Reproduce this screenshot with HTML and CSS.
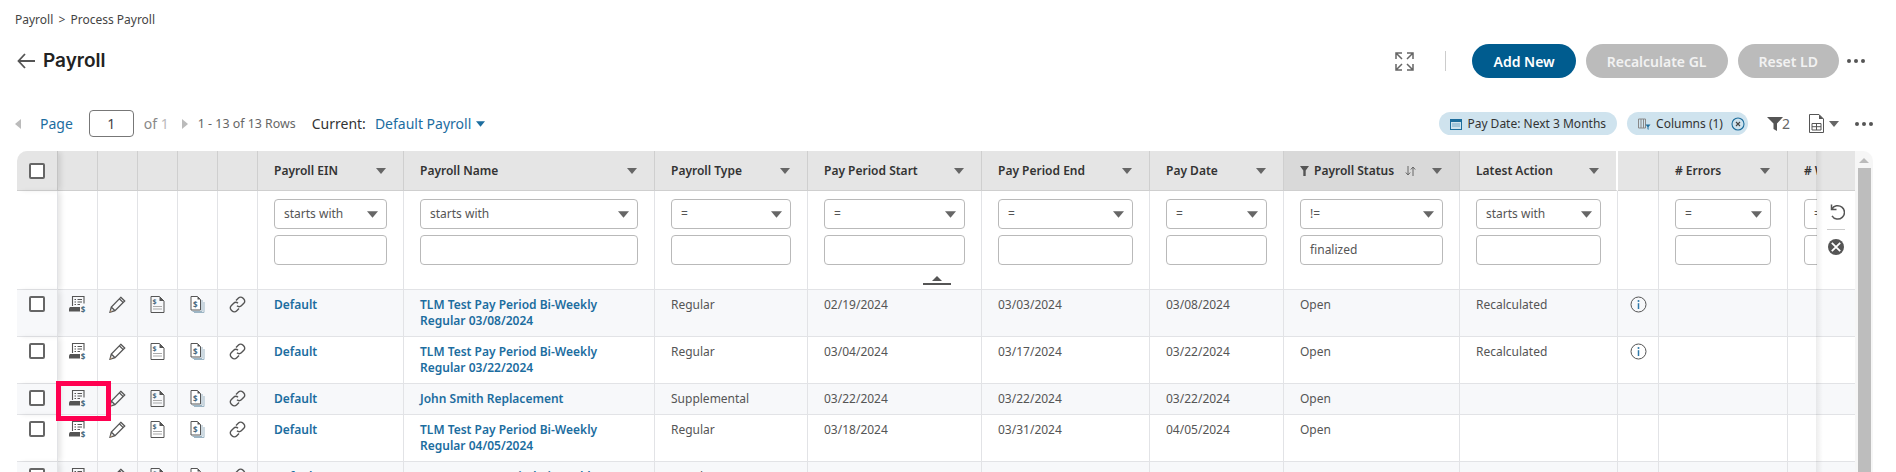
FILE: index.html
```html
<!DOCTYPE html>
<html lang="en">
<head>
<meta charset="utf-8">
<title>Payroll</title>
<link rel="stylesheet" href="styles.css">
</head>
<body>
<svg class="defs" aria-hidden="true">
  <symbol id="i-run" viewBox="0 0 17 17">
    <path d="M3.500 10V.5h11.500v7" fill="none" stroke="#555" stroke-width="1.100"/>
    <path d="M5.500 3.500h1.500M8.500 3.500h4.500M5.500 6h1.500M8.500 6h4.500M5.500 8.500h1.500M8.500 8.500h2.500" stroke="#555" stroke-width="1.100"/>
    <path d="M0 12.500l1-1.500h10v4.500H0z" fill="#555"/>
    <text x="11.800" y="16.500" class="dollar-md">$</text>
  </symbol>
  <symbol id="i-pencil" viewBox="0 0 17 17">
    <path d="M11.800 1.300l3.900 3.700L6 14.700l-5 1.500 1.300-5.200zM10.300 2.800l4 3.800M2.300 11l3.700 3.700" fill="none" stroke="#555" stroke-width="1.300"/>
    <path d="M1 16.200l.5-2.300 1.800 1.700z" fill="#aa8a6a"/>
  </symbol>
  <symbol id="i-doc" viewBox="0 0 14 17">
    <path d="M.5.500h8.500l4.500 4.500v11.500H.5z" fill="none" stroke="#555" stroke-width="1"/>
    <path d="M9 .5l4.500 4.500H9z" fill="#555"/>
    <path d="M2.500 10.500h9M2.500 13h9" stroke="#aaa" stroke-width="1.200"/>
    <text x="2" y="8" class="dollar-sm">$</text>
  </symbol>
  <symbol id="i-docs" viewBox="0 0 14 17">
    <path d="M2 15.500h9.500V4M3.500 16.500h10V6" fill="none" stroke="#9db5c4" stroke-width="1"/>
    <path d="M.5.500h6.500l3 3v10.500H.5z" fill="#fff" stroke="#555" stroke-width="1"/>
    <path d="M7 .5l3 3H7z" fill="#555"/>
    <text x="2.400" y="11.500" class="dollar-md">$</text>
  </symbol>
  <symbol id="i-link" viewBox="0 0 17 17">
    <path d="M7 4.500l2.500-2.500a3 3 0 0 1 4.300 0l1 1a3 3 0 0 1 0 4.300L12.300 9.800a3 3 0 0 1-4.300 0" fill="none" stroke="#555" stroke-width="1.400"/>
    <path d="M10 12.500L7.500 15a3 3 0 0 1-4.300 0l-1-1a3 3 0 0 1 0-4.300L4.700 7.200a3 3 0 0 1 4.300 0" fill="none" stroke="#555" stroke-width="1.400"/>
  </symbol>
  <symbol id="i-info" viewBox="0 0 17 17">
    <circle cx="8.500" cy="8.500" r="7.500" fill="none" stroke="#555" stroke-width="1"/>
    <circle cx="8.500" cy="5" r="1" fill="#2f78a8"/>
    <path d="M8.500 7.200v5.800" stroke="#2f78a8" stroke-width="1.500"/>
  </symbol>
  <symbol id="i-caret" viewBox="0 0 10 6">
    <path d="M0 0h10L5 6z" fill="currentColor"/>
  </symbol>
  <symbol id="i-dots" viewBox="0 0 18 4">
    <circle cx="2" cy="2" r="2" fill="#555"/><circle cx="9" cy="2" r="2" fill="#555"/><circle cx="16" cy="2" r="2" fill="#555"/>
  </symbol>
</svg>

<nav class="breadcrumb">Payroll <span class="crumb-sep">&gt;</span> Process Payroll</nav>

<header class="title-row">
  <svg class="back" viewBox="0 0 18 16"><path d="M8 1L1.500 8 8 15M1.500 8H18" fill="none" stroke="#555" stroke-width="1.800"/></svg>
  <h1 class="title">Payroll</h1>
  <svg class="expand" viewBox="0 0 19 19">
    <path d="M1 7V1h6M1 1l6 6M12 1h6v6M18 1l-6 6M1 12v6h6M1 18l6-6M18 12v6h-6M18 18l-6-6" fill="none" stroke="#666" stroke-width="1.500"/>
  </svg>
  <span class="title-divider"></span>
  <button class="btn btn-primary">Add New</button>
  <button class="btn btn-disabled">Recalculate GL</button>
  <button class="btn btn-disabled">Reset LD</button>
  <svg class="dots title-dots"><use href="#i-dots"/></svg>
</header>

<section class="toolbar">
  <span class="arrow-left"></span>
  <a class="page-link">Page</a>
  <input class="page-input" value="1">
  <span class="of">of <span class="of-num">1</span></span>
  <span class="arrow-right"></span>
  <span class="rows">1 - 13 of 13 Rows</span>
  <span class="current">Current:</span>
  <a class="view">Default Payroll</a>
  <svg class="view-caret"><use href="#i-caret"/></svg>
  <span class="spacer"></span>
  <span class="chip chip-date">
    <svg class="chip-icon" viewBox="0 0 12 12">
      <rect x=".5" y="1.500" width="11" height="10" fill="none" stroke="#1d6d9c"/>
      <path d="M.5 1.500h11v2.500H.5z" fill="#1d6d9c"/>
      <path d="M2.500 6h7M2.500 8h7" stroke="#1d6d9c" stroke-dasharray="1 1"/>
    </svg>
    Pay Date: Next 3 Months
  </span>
  <span class="chip chip-cols">
    <svg class="chip-icon-cols" viewBox="0 0 13 12">
      <path d="M.5 1v9h7V1zM3 1v9M5.500 1v9" fill="none" stroke="#888"/>
      <path d="M7.500 6.500h5l-2 2.500v3l-1-1V9z" fill="#1d6d9c"/>
    </svg>
    Columns (1)
    <svg class="chip-close" viewBox="0 0 14 14">
      <circle cx="7" cy="7" r="6" fill="none" stroke="#1d6d9c" stroke-width="1.100"/>
      <path d="M5 5l4 4M9 5l-4 4" stroke="#444" stroke-width="1.100"/>
    </svg>
  </span>
  <svg class="funnel" viewBox="0 0 16 14"><path d="M0 0h16L10 6.500V14L6.500 12V6.500z" fill="#555"/></svg>
  <span class="funnel-count">2</span>
  <svg class="export" viewBox="0 0 15 19">
    <path d="M.5.500h9.500l4.500 4.500v13.500H.5z" fill="#fff" stroke="#555"/>
    <path d="M10 .5l4.500 4.500H10z" fill="#555"/>
    <path d="M3 9.500h9v6.500H3zM3 12.700h9M7.500 9.500V16" fill="none" stroke="#555"/>
  </svg>
  <svg class="export-caret"><use href="#i-caret"/></svg>
  <svg class="dots toolbar-dots"><use href="#i-dots"/></svg>
</section>

<section class="grid">
  <div class="grid-main">
    <table class="data">
      <colgroup>
        <col class="c-check"><col class="w40"><col class="w40"><col class="w40"><col class="w40"><col class="w40">
        <col class="c-ein"><col class="c-name"><col class="c-type"><col class="c-start"><col class="c-end"><col class="c-pay"><col class="c-status"><col class="c-action"><col class="c-info"><col class="c-err"><col class="c-warn"><col class="c-tools">
      </colgroup>
      <thead>
        <tr class="head">
          <th class="cb-cell frozen"><span class="cb"></span></th>
          <th></th><th></th><th></th><th></th><th></th>
          <th><div class="th"><span>Payroll EIN</span><svg class="th-caret"><use href="#i-caret"/></svg></div></th>
          <th><div class="th"><span>Payroll Name</span><svg class="th-caret"><use href="#i-caret"/></svg></div></th>
          <th><div class="th"><span>Payroll Type</span><svg class="th-caret"><use href="#i-caret"/></svg></div></th>
          <th><div class="th"><span>Pay Period Start</span><svg class="th-caret"><use href="#i-caret"/></svg></div></th>
          <th><div class="th"><span>Pay Period End</span><svg class="th-caret"><use href="#i-caret"/></svg></div></th>
          <th><div class="th"><span>Pay Date</span><svg class="th-caret"><use href="#i-caret"/></svg></div></th>
          <th class="sorted"><div class="th th-status">
            <svg class="th-funnel" viewBox="0 0 9 10"><path d="M0 0h9L5.700 4.500V10H3.300V4.500z" fill="#555"/></svg>
            <span>Payroll Status</span>
            <svg class="th-sort" viewBox="0 0 11 10"><path d="M3 0v8.500M.8 6.500L3 9l2.200-2.500M8 10V1.500M5.800 3.500L8 1l2.200 2.500" fill="none" stroke="#666" stroke-width="1"/></svg>
            <svg class="th-caret th-caret-end"><use href="#i-caret"/></svg>
          </div></th>
          <th class="gap-right"><div class="th"><span>Latest Action</span><svg class="th-caret"><use href="#i-caret"/></svg></div></th>
          <th></th>
          <th><div class="th"><span># Errors</span><svg class="th-caret"><use href="#i-caret"/></svg></div></th>
          <th class="clip"><div class="th th-wide"><span># Warnings</span></div></th>
          <th class="tools-head"></th>
        </tr>
        <tr class="filters">
          <td class="frozen"></td><td></td><td></td><td></td><td></td><td></td>
          <td><div class="sel">starts with<svg class="sel-caret"><use href="#i-caret"/></svg></div><div class="inp"></div></td>
          <td><div class="sel">starts with<svg class="sel-caret"><use href="#i-caret"/></svg></div><div class="inp"></div></td>
          <td><div class="sel">=<svg class="sel-caret"><use href="#i-caret"/></svg></div><div class="inp"></div></td>
          <td><div class="sel">=<svg class="sel-caret"><use href="#i-caret"/></svg></div><div class="inp"></div></td>
          <td><div class="sel">=<svg class="sel-caret"><use href="#i-caret"/></svg></div><div class="inp"></div></td>
          <td><div class="sel">=<svg class="sel-caret"><use href="#i-caret"/></svg></div><div class="inp"></div></td>
          <td><div class="sel">!=<svg class="sel-caret"><use href="#i-caret"/></svg></div><div class="inp">finalized</div></td>
          <td><div class="sel">starts with<svg class="sel-caret"><use href="#i-caret"/></svg></div><div class="inp"></div></td>
          <td></td>
          <td><div class="sel">=<svg class="sel-caret"><use href="#i-caret"/></svg></div><div class="inp"></div></td>
          <td class="clip"><div class="sel sel-wide">=</div><div class="inp inp-wide"></div></td>
          <td class="tools">
            <svg class="tool-undo" viewBox="0 0 17 17"><path d="M3.500 1.500v5h5M3.800 6.300A6.700 6.700 0 1 1 4 12.800" fill="none" stroke="#555" stroke-width="1.500"/></svg>
            <span class="tool-line"></span>
            <svg class="tool-x" viewBox="0 0 16 16"><circle cx="8" cy="8" r="8" fill="#555"/><path d="M3.800 3.800l8.400 8.400M12.200 3.800l-8.400 8.400" stroke="#fff" stroke-width="1.800"/></svg>
          </td>
        </tr>
      </thead>
      <tbody>
        <tr class="row alt row-tall">
          <td class="frozen cb-cell"><span class="cb"></span></td>
          <td><svg class="ic"><use href="#i-run"/></svg></td><td><svg class="ic"><use href="#i-pencil"/></svg></td><td><svg class="ic"><use href="#i-doc"/></svg></td><td><svg class="ic"><use href="#i-docs"/></svg></td><td><svg class="ic"><use href="#i-link"/></svg></td>
          <td><a class="lnk">Default</a></td>
          <td><a class="lnk">TLM Test Pay Period Bi-Weekly Regular 03/08/2024</a></td>
          <td>Regular</td><td>02/19/2024</td><td>03/03/2024</td><td>03/08/2024</td><td>Open</td><td>Recalculated</td>
          <td class="info-cell"><svg class="ic"><use href="#i-info"/></svg></td><td></td><td></td><td></td>
        </tr>
        <tr class="row row-tall">
          <td class="frozen cb-cell"><span class="cb"></span></td>
          <td><svg class="ic"><use href="#i-run"/></svg></td><td><svg class="ic"><use href="#i-pencil"/></svg></td><td><svg class="ic"><use href="#i-doc"/></svg></td><td><svg class="ic"><use href="#i-docs"/></svg></td><td><svg class="ic"><use href="#i-link"/></svg></td>
          <td><a class="lnk">Default</a></td>
          <td><a class="lnk">TLM Test Pay Period Bi-Weekly Regular 03/22/2024</a></td>
          <td>Regular</td><td>03/04/2024</td><td>03/17/2024</td><td>03/22/2024</td><td>Open</td><td>Recalculated</td>
          <td class="info-cell"><svg class="ic"><use href="#i-info"/></svg></td><td></td><td></td><td></td>
        </tr>
        <tr class="row alt row-short">
          <td class="frozen cb-cell"><span class="cb"></span></td>
          <td><svg class="ic"><use href="#i-run"/></svg></td><td><svg class="ic"><use href="#i-pencil"/></svg></td><td><svg class="ic"><use href="#i-doc"/></svg></td><td><svg class="ic"><use href="#i-docs"/></svg></td><td><svg class="ic"><use href="#i-link"/></svg></td>
          <td><a class="lnk">Default</a></td>
          <td><a class="lnk">John Smith Replacement</a></td>
          <td>Supplemental</td><td>03/22/2024</td><td>03/22/2024</td><td>03/22/2024</td><td>Open</td><td></td>
          <td></td><td></td><td></td><td></td>
        </tr>
        <tr class="row row-tall">
          <td class="frozen cb-cell"><span class="cb"></span></td>
          <td><svg class="ic"><use href="#i-run"/></svg></td><td><svg class="ic"><use href="#i-pencil"/></svg></td><td><svg class="ic"><use href="#i-doc"/></svg></td><td><svg class="ic"><use href="#i-docs"/></svg></td><td><svg class="ic"><use href="#i-link"/></svg></td>
          <td><a class="lnk">Default</a></td>
          <td><a class="lnk">TLM Test Pay Period Bi-Weekly Regular 04/05/2024</a></td>
          <td>Regular</td><td>03/18/2024</td><td>03/31/2024</td><td>04/05/2024</td><td>Open</td><td></td>
          <td></td><td></td><td></td><td></td>
        </tr>
        <tr class="row alt row-tall">
          <td class="frozen cb-cell"><span class="cb"></span></td>
          <td><svg class="ic"><use href="#i-run"/></svg></td><td><svg class="ic"><use href="#i-pencil"/></svg></td><td><svg class="ic"><use href="#i-doc"/></svg></td><td><svg class="ic"><use href="#i-docs"/></svg></td><td><svg class="ic"><use href="#i-link"/></svg></td>
          <td><a class="lnk">Default</a></td>
          <td><a class="lnk">TLM Test Pay Period Bi-Weekly Regular 04/19/2024</a></td>
          <td>Regular</td><td>04/01/2024</td><td>04/14/2024</td><td>04/19/2024</td><td>Open</td><td></td>
          <td></td><td></td><td></td><td></td>
        </tr>
      </tbody>
    </table>
    <div class="filter-toggle"></div>
    <div class="tools-shadow"></div>
    <div class="highlight"></div>
  </div>
  <div class="scroll">
    <span class="scroll-up"></span>
    <span class="scroll-thumb"></span>
  </div>
</section>
</body>
</html>
```
FILE: styles.css
```css
* { box-sizing: border-box; }
html, body { margin: 0; height: 472px; overflow: hidden; background: #fff; }
body { font-family: "Noto Sans", "Liberation Sans", sans-serif; font-size: 12px; color: #444; }
.defs { display: none; }
.dollar-sm { font: 700 7px "Noto Sans", sans-serif; fill: #4a6a80; }
.dollar-md { font: 700 8px "Noto Sans", sans-serif; fill: #4a6a80; }

.breadcrumb { height: 40px; padding: 12px 0 0 15px; line-height: 16px; color: #444; }
.crumb-sep { margin: 0 2px; }

.title-row { display: flex; align-items: center; height: 34px; margin-top: 4px; padding: 0 31px 0 17px; }
.back { width: 18px; height: 16px; }
.title { margin: 0 0 0 8px; font: 600 19px/24px Inter, sans-serif; color: #222; flex: 1; }
.expand { width: 19px; height: 19px; margin-right: 31px; }
.title-divider { width: 1px; height: 20px; background: #ccc; margin-right: 26px; }
.btn { height: 34px; padding: 0 21px; border: 0; border-radius: 17px; font: 600 14px "Noto Sans", sans-serif; color: #fff; margin-right: 10px; }
.btn-primary { background: #005c8f; }
.btn-disabled { background: #bbb; color: #f2f2f2; }
.dots { width: 18px; height: 4px; }
.title-dots { margin-left: -2px; }

.toolbar { display: flex; align-items: center; height: 27px; margin-top: 32px; padding: 0 23px 0 15px; }
.arrow-left { border: 5px solid transparent; border-left: 0; border-right: 6px solid #bbb; }
.page-link { margin-left: 19px; font-size: 14px; color: #1c6d9f; }
.page-input { width: 45px; height: 27px; margin-left: 16px; border: 1px solid #777; border-radius: 4px; text-align: center; font: 14px "Noto Sans", sans-serif; color: #444; padding: 0; }
.of { margin-left: 10px; font-size: 14px; color: #888; }
.of-num { color: #bbb; }
.arrow-right { margin-left: 13px; border: 5px solid transparent; border-right: 0; border-left: 6px solid #bbb; }
.rows { margin-left: 10px; color: #666; font-size: 12.4px; }
.current { margin-left: 16px; font-size: 14px; color: #333; }
.view { margin-left: 9px; font-size: 14px; color: #1c6d9f; }
.view-caret { width: 9px; height: 6px; margin-left: 5px; color: #1c6d9f; }
.spacer { flex: 1; }
.chip { display: flex; align-items: center; height: 23px; border-radius: 12px; background: #cfe3ee; color: #333; font-size: 12px; white-space: nowrap; }
.chip-date { padding: 0 11px; }
.chip-icon { width: 12px; height: 12px; margin-right: 5px; }
.chip-cols { margin-left: 10px; padding: 0 3px 0 11px; }
.chip-icon-cols { width: 13px; height: 12px; margin-right: 5px; }
.chip-close { width: 14px; height: 14px; margin-left: 8px; }
.funnel { width: 16px; height: 14px; margin-left: 19px; }
.funnel-count { font-size: 14px; color: #666; margin-left: -1px; }
.export { width: 15px; height: 19px; margin-left: 19px; }
.export-caret { width: 10px; height: 6px; margin-left: 5px; color: #666; }
.toolbar-dots { margin-left: 16px; }

.grid { display: flex; margin: 14px 0 0 17px; width: 1856px; }
.grid-main { position: relative; width: 1838px; height: 321px; overflow: hidden; border-top-left-radius: 10px; }
.data { width: 1838px; table-layout: fixed; border-collapse: separate; border-spacing: 0; }
.c-check { width: 41px; }
.w40 { width: 40px; }
.c-ein { width: 146px; }
.c-name { width: 251px; }
.c-type { width: 153px; }
.c-start { width: 174px; }
.c-end { width: 168px; }
.c-pay { width: 134px; }
.c-status { width: 176px; }
.c-action { width: 158px; }
.c-info { width: 41px; }
.c-err { width: 129px; }
.c-warn { width: 29px; }
.c-tools { width: 38px; }

th, td { padding: 0; border-right: 1px solid #e2e3e6; border-bottom: 1px solid #e2e3e6; vertical-align: top; font-weight: 400; text-align: left; }
.head th { height: 40px; background: #e5e5e5; border-right-color: #cfcfcf; border-bottom-color: #cfcfcf; vertical-align: middle; font-weight: 600; color: #333; }
.head th.sorted { background: #d9d9d9; }
.head th.gap-right { border-right: 2px solid #fff; }
.head th.clip { border-right: 0; }
.head th.tools-head { border-right: 0; }
.clip { overflow: hidden; border-right: 0; }
.th { display: flex; align-items: center; justify-content: space-between; padding: 0 17px 0 16px; white-space: nowrap; }
.th-wide { padding-right: 0; }
.th-status { justify-content: flex-start; padding-left: 16px; }
.th-funnel { width: 9px; height: 10px; margin-right: 5px; }
.th-sort { width: 11px; height: 10px; margin-left: 11px; }
.th-caret { width: 10px; height: 6px; color: #666; flex: none; }
.th-caret-end { margin-left: auto; }
.frozen { box-shadow: 4px 0 5px -1px rgba(0,0,0,.10); position: relative; }
.head th.frozen { border-right-color: #c4c4c4; }

.filters td { height: 99px; padding: 8px 16px 0; }
.filters td.frozen { padding: 0; }
.filters td.clip { padding-right: 0; }
.sel, .inp { height: 30px; border: 1px solid #b9b9b9; border-radius: 4px; background: #fff; line-height: 28px; padding-left: 9px; color: #555; }
.sel { display: flex; align-items: center; justify-content: space-between; padding-right: 8px; white-space: nowrap; }
.inp { margin-top: 6px; }
.sel-wide, .inp-wide { width: 80px; }
.sel-caret { width: 11px; height: 7px; color: #666; flex: none; }
.filters td.tools { padding: 12px 0 0; text-align: center; border-right: 0; }
.tool-undo { display: block; width: 17px; height: 17px; margin: 0 auto; }
.tool-line { display: block; width: 18px; height: 1px; background: #ccc; margin: 9px auto 9px; }
.tool-x { display: block; width: 16px; height: 16px; margin: 0 auto; }

.row td { padding: 7px 16px 0; line-height: 16px; color: #555; }
.row td.frozen, .row td:nth-child(-n+6) { padding: 6px 0 0; text-align: center; }
.row td:last-child { border-right: 0; }
.row td:nth-last-child(2) { border-right: 0; }
.row.alt td { background: #f7f8fa; }
.row-tall td { height: 47px; }
.row-short td { height: 31px; }
.row td.info-cell { padding: 6px 0 0; text-align: center; }
.lnk { color: #1c6d9f; font-weight: 600; }
.cb { display: inline-block; width: 16px; height: 16px; border: 2px solid #666; border-radius: 2px; background: #fff; vertical-align: top; }
.head .cb { vertical-align: middle; }
.cb-cell { text-align: center; }
.ic { display: inline-block; width: 17px; height: 17px; vertical-align: top; }

.filter-toggle { position: absolute; top: 125px; left: 906px; width: 28px; height: 9px; border-bottom: 2px solid #555; }
.filter-toggle::before { content: ""; position: absolute; left: 9px; top: 0; border: 5px solid transparent; border-top: 0; border-bottom: 5px solid #555; }
.tools-shadow { position: absolute; top: 0; bottom: 0; left: 1799px; width: 7px; background: linear-gradient(to right, rgba(0,0,0,.07), rgba(0,0,0,0)); }
.highlight { position: absolute; left: 39px; top: 230px; width: 55px; height: 40px; border: 5px solid #ff0050; }

.scroll { display: flex; flex-direction: column; align-items: center; width: 18px; height: 321px; padding: 7px 0 0; border-top-right-radius: 10px; background: #f6f6f6; }
.scroll-up { border: 5px solid transparent; border-top: 0; border-bottom: 5px solid #bbb; }
.scroll-thumb { width: 13px; flex: 1; margin-top: 5px; background: #bdbdbd; }
```
